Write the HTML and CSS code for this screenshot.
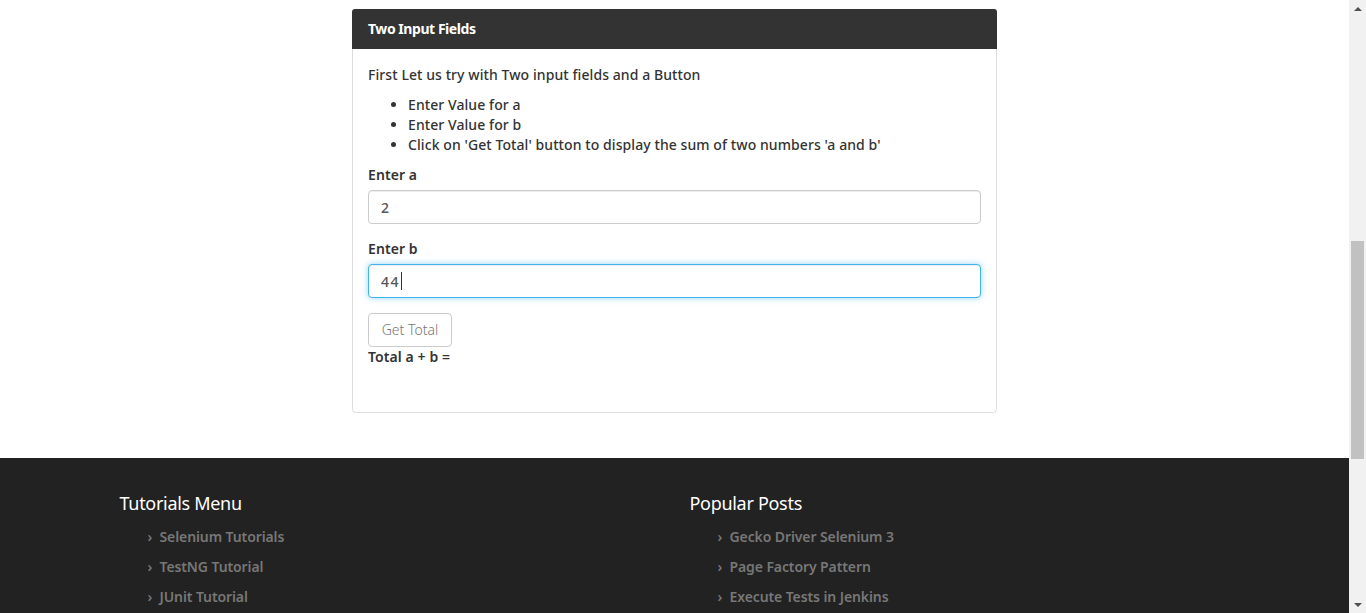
FILE: index.html
```html
<!DOCTYPE html>
<html lang="en">
<head>
<meta charset="utf-8">
<title>Two Input Fields</title>
<link rel="stylesheet" href="styles.css">
</head>
<body>
<div class="page">
  <main class="main">
    <section class="panel">
      <div class="panel-heading">Two Input Fields</div>
      <div class="panel-body">
        <p class="intro">First Let us try with Two input fields and a Button</p>
        <ul class="steps">
          <li>Enter Value for a</li>
          <li>Enter Value for b</li>
          <li>Click on 'Get Total' button to display the sum of two numbers 'a and b'</li>
        </ul>
        <div class="form-group">
          <label class="label" for="sum1">Enter a</label>
          <input class="field" id="sum1" type="text" value="2">
        </div>
        <div class="form-group">
          <label class="label" for="sum2">Enter b</label>
          <div class="field-wrap">
            <input class="field field-focus" id="sum2" type="text" value="44">
            <span class="caret"></span>
          </div>
        </div>
        <button class="btn" type="button">Get Total</button>
        <div class="total">Total a + b = </div>
      </div>
    </section>
    <footer class="footer">
      <div class="footer-inner">
        <div class="footer-col">
          <h3 class="footer-title">Tutorials Menu</h3>
          <ul class="footer-list">
            <li><span class="chev">›</span>Selenium Tutorials</li>
            <li><span class="chev">›</span>TestNG Tutorial</li>
            <li><span class="chev">›</span>JUnit Tutorial</li>
          </ul>
        </div>
        <div class="footer-col">
          <h3 class="footer-title">Popular Posts</h3>
          <ul class="footer-list">
            <li><span class="chev">›</span>Gecko Driver Selenium 3</li>
            <li><span class="chev">›</span>Page Factory Pattern</li>
            <li><span class="chev">›</span>Execute Tests in Jenkins</li>
          </ul>
        </div>
      </div>
    </footer>
  </main>
  <aside class="scrollbar">
    <div class="sb-arrow sb-up"></div>
    <div class="sb-track">
      <div class="sb-thumb"></div>
    </div>
    <div class="sb-arrow sb-down"></div>
  </aside>
</div>
</body>
</html>
```

FILE: styles.css
```css
* { box-sizing: border-box; }
html, body { margin: 0; padding: 0; }
body {
  font-family: "Noto Sans", "Open Sans", sans-serif;
  font-size: 14px;
  line-height: 20px;
  color: #333;
  background: #fff;
  overflow: hidden;
}
.page {
  display: flex;
  height: 613px;
  overflow: hidden;
}
.main {
  flex: 1;
  display: flex;
  flex-direction: column;
  padding-top: 9px;
  min-width: 0;
}
.panel {
  width: 645px;
  align-self: center;
  border: 1px solid #ddd;
  border-radius: 4px;
  margin-bottom: 45px;
  background: #fff;
}
.panel-heading {
  background: #333;
  color: #fff;
  font-weight: 700;
  font-size: 14px;
  height: 40px;
  padding: 10px 16px 10px;
  border-radius: 3px 3px 0 0;
  margin: -1px -1px 0;
  letter-spacing: -0.45px;
}
.panel-body {
  padding: 16px 15px 15px;
  font-weight: 500;
  letter-spacing: 0.08px;
}
.intro { margin: 0 0 10px; }
.steps {
  margin: 0 0 10px;
  padding-left: 40px;
}
.form-group { margin-bottom: 15px; display: flex; flex-direction: column; }
.label {
  font-weight: 600;
  margin-bottom: 5px;
}
.field-wrap { position: relative; display: flex; }
.field {
  width: 100%;
  height: 34px;
  padding: 6px 12px;
  font: inherit;
  font-weight: 500;
  color: #555;
  border: 1px solid #ccc;
  border-radius: 4px;
  background: #fff;
  box-shadow: inset 0 1px 1px rgba(0,0,0,.075);
  outline: none;
}
.field-focus {
  border-color: #3fb3f0;
  box-shadow: inset 0 1px 1px rgba(0,0,0,.075), 0 0 6px rgba(63,179,240,.55);
  letter-spacing: 1.5px;
}
.caret {
  position: absolute;
  left: 33px;
  top: 8px;
  width: 1px;
  height: 18px;
  background: #333;
}
.btn {
  align-self: flex-start;
  height: 34px;
  width: 84px;
  padding: 6px 0;
  font: inherit;
  font-weight: 300;
  color: #777;
  background: #fff;
  border: 1px solid #ccc;
  border-radius: 4px;
}
.total {
  font-weight: 600;
  margin-bottom: 30px;
}
.footer {
  flex: 1;
  background: #222;
  padding-top: 34px;
}
.footer-inner {
  width: 1170px;
  margin: 0 auto;
  padding: 0 15px;
  display: flex;
}
.footer-col {
  flex: 1;
  padding: 0 15px;
}
.footer-title {
  margin: 0;
  font-size: 18px;
  line-height: 22px;
  font-weight: 400;
  letter-spacing: -0.3px;
  color: #fff;
}
.footer-list {
  list-style: none;
  margin: 8px 0 0;
  padding: 0 0 0 28px;
}
.footer-list li {
  padding: 5px 0;
  color: #777;
  font-weight: 600;
  line-height: 20px;
  letter-spacing: -0.1px;
}
.chev {
  display: inline-block;
  width: 12px;
  font-size: 14px;
}
.scrollbar {
  width: 17px;
  flex: none;
  background: #f1f1f1;
  display: flex;
  flex-direction: column;
}
.sb-arrow {
  height: 17px;
  flex: none;
  display: flex;
  align-items: center;
  justify-content: center;
}
.sb-up::before {
  content: "";
  border-left: 4px solid transparent;
  border-right: 4px solid transparent;
  border-bottom: 4px solid #505050;
}
.sb-down::before {
  content: "";
  border-left: 4px solid transparent;
  border-right: 4px solid transparent;
  border-top: 4px solid #505050;
}
.sb-track {
  flex: 1;
  padding: 224px 2px 0;
}
.sb-thumb {
  height: 218px;
  background: #c1c1c1;
}
```
